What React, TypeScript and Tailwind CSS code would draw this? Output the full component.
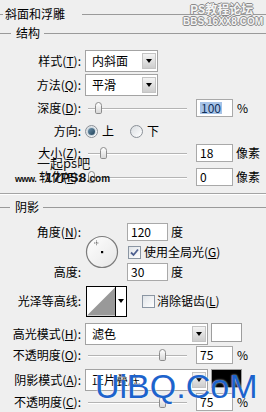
import type { ReactNode } from 'react';

const LINE = 'bg-[#9a9a9a]';

const Mn = ({ children }: { children: ReactNode }) => (
  <span className="underline underline-offset-[1px]">{children}</span>
);

function Row({ label, className, children }: { label: ReactNode; className: string; children: ReactNode }) {
  return (
    <div className={`flex items-center ${className}`}>
      <div className="w-[81px] shrink-0 text-right leading-none whitespace-nowrap">{label}</div>
      <div className="ml-[4px] flex h-full items-center">{children}</div>
    </div>
  );
}

function Field({ value, className = 'w-[37px]', selected = false }: { value: string; className?: string; selected?: boolean }) {
  return (
    <div className={`flex h-[18px] items-center border border-[#a9a9a9] bg-white pl-[3px] leading-none ${className}`}>
      {selected ? <span className="bg-[#a6c2e6] px-px text-[#10305a]">{value}</span> : value}
    </div>
  );
}

function Slider({ thumb }: { thumb: string }) {
  return (
    <div className="relative h-[18px] w-[105px]">
      <div className="absolute left-[3px] right-[3px] top-[9px] h-px bg-[#b4b4b4]" />
      <div className="absolute left-[3px] right-[3px] top-[10px] h-px bg-white" />
      <div
        className={`absolute top-[3px] h-[12px] w-[7px] rounded-t-[4px] rounded-b-[2px] border border-[#8c8c8c] bg-gradient-to-b from-white to-[#d8d8d8] ${thumb}`}
      />
    </div>
  );
}

function Arrow() {
  return <div className="h-0 w-0 border-x-[3.5px] border-t-[4px] border-x-transparent border-t-black" />;
}

function Select({ value, className }: { value: string; className: string }) {
  return (
    <div className={`flex h-[22px] border border-[#a3a3a3] bg-white ${className}`}>
      <div className="flex flex-1 items-center pl-[6px] leading-none">{value}</div>
      <div className="my-[2px] mr-[1px] flex w-[14px] items-center justify-center border border-[#c4c4c4] bg-gradient-to-b from-[#f4f4f4] to-[#cdcdcd]">
        <Arrow />
      </div>
    </div>
  );
}

function Radio({ on }: { on?: boolean }) {
  return (
    <div className="flex h-[13px] w-[13px] items-center justify-center rounded-full border border-[#8a9097] bg-gradient-to-br from-[#d9dde1] to-white">
      {on && <div className="h-[7px] w-[7px] rounded-full bg-gradient-to-br from-[#6f93ad] to-[#1f4259] ring-1 ring-[#c9d6df]" />}
    </div>
  );
}

function Check({ on }: { on?: boolean }) {
  return (
    <div className="flex h-[13px] w-[13px] items-center justify-center border border-[#8b96a3] bg-gradient-to-br from-[#e0e4e8] to-white">
      {on && (
        <svg width="9" height="9" viewBox="0 0 9 9">
          <path d="M1 4.5 L3.5 7 L8 1.5" fill="none" stroke="#4d5f8f" strokeWidth="1.8" />
        </svg>
      )}
    </div>
  );
}

const Header = ({ text, lead, gap }: { text: string; lead: string; gap: string }) => (
  <div className="flex h-[18px] items-center">
    <div className={`h-px ${LINE} ${lead}`} />
    <span className="ml-[5px] leading-none">{text}</span>
    <div className={`h-px flex-1 ${LINE} ${gap}`} />
  </div>
);

export default function App() {
  return (
    <div className="relative h-[412px] w-[266px] overflow-hidden bg-[#efefef] font-['Noto_Sans_CJK_SC','Noto_Sans',sans-serif] text-[12px] text-black">
      {/* 标题 */}
      <div className="mt-[4px] flex h-[20px] items-center">
        <div className={`h-px w-[3px] ${LINE}`} />
        <span className="ml-[2px] leading-none">斜面和浮雕</span>
        <div className={`ml-[17px] h-px flex-1 ${LINE}`} />
      </div>

      <Header text="结构" lead="w-[11px]" gap="ml-[4px]" />

      <Row label={<>样式(<Mn>T</Mn>):</>} className="mt-[8px] h-[22px]">
        <Select value="内斜面" className="w-[73px]" />
      </Row>
      <Row label={<>方法(<Mn>Q</Mn>):</>} className="mt-[2px] h-[22px]">
        <Select value="平滑" className="w-[73px]" />
      </Row>
      <Row label={<>深度(<Mn>D</Mn>):</>} className="mt-[3px] h-[18px]">
        <Slider thumb="left-[10px]" />
        <div className="ml-[6px]">
          <Field value="100" selected />
        </div>
        <span className="ml-[4px] leading-none">%</span>
      </Row>
      <Row label="方向:" className="mt-[5px] h-[18px]">
        <Radio on />
        <span className="ml-[4px] leading-none">上</span>
        <div className="ml-[16px]">
          <Radio />
        </div>
        <span className="ml-[4px] leading-none">下</span>
      </Row>
      <Row label={<>大小(<Mn>Z</Mn>):</>} className="mt-[4px] h-[18px]">
        <Slider thumb="left-[15px]" />
        <div className="ml-[6px]">
          <Field value="18" />
        </div>
        <span className="ml-[3px] leading-none">像素</span>
      </Row>
      <Row label={<>软化(<Mn>F</Mn>):</>} className="mt-[6px] h-[18px]">
        <Slider thumb="left-[3px]" />
        <div className="ml-[6px]">
          <Field value="0" />
        </div>
        <span className="ml-[3px] leading-none">像素</span>
      </Row>

      <div className="mt-[7px] h-px bg-[#a4a4a4]" />
      <div className="h-px bg-white" />

      <div className="mt-[3px]">
        <Header text="阴影" lead="w-[10px]" gap="ml-[4px]" />
      </div>

      {/* 角度 / 高度 */}
      <div className="mt-[7px] flex h-[58px]">
        <div className="flex w-[81px] flex-col justify-between text-right">
          <div className="h-[18px] leading-[18px]">角度(<Mn>N</Mn>):</div>
          <div className="h-[18px] leading-[18px]">高度:</div>
        </div>
        <div className="ml-[4px] flex w-[34px] items-center">
          <svg width="34" height="34" viewBox="0 0 34 34">
            <defs>
              <linearGradient id="dial" x1="0" y1="0" x2="1" y2="1">
                <stop offset="0" stopColor="#ffffff" />
                <stop offset="1" stopColor="#e6e6e6" />
              </linearGradient>
            </defs>
            <circle cx="17" cy="17" r="15.5" fill="url(#dial)" stroke="#7c7c7c" strokeWidth="1.2" />
            <rect x="16" y="16" width="2.2" height="2.2" fill="#000" />
            <path d="M11.5 5.5 v5 M9 8 h5" stroke="#555" strokeWidth="0.8" strokeDasharray="1 0.6" />
          </svg>
        </div>
        <div className="ml-[8px] flex flex-col justify-between">
          <div className="flex items-center">
            <Field value="120" className="w-[41px]" />
            <span className="ml-[3px] leading-none">度</span>
          </div>
          <div className="ml-px flex items-center">
            <Check on />
            <span className="ml-[3px] leading-none">使用全局光(<Mn>G</Mn>)</span>
          </div>
          <div className="flex items-center">
            <Field value="30" className="w-[41px]" />
            <span className="ml-[3px] leading-none">度</span>
          </div>
        </div>
      </div>

      <Row label="光泽等高线:" className="mt-[5px] h-[30px]">
        <div className="ml-px flex h-[31px] w-[41px] border border-black bg-white">
          <svg width="29" height="29" viewBox="0 0 29 29" className="border-r border-black">
            <polygon points="0,29 29,0 29,29" fill="#999999" />
          </svg>
          <div className="flex flex-1 items-center justify-center">
            <Arrow />
          </div>
        </div>
        <div className="ml-[15px]">
          <Check />
        </div>
        <span className="ml-[2px] leading-none">消除锯齿(<Mn>L</Mn>)</span>
      </Row>

      <Row label={<>高光模式(<Mn>H</Mn>):</>} className="mt-[7px] h-[22px]">
        <Select value="滤色" className="w-[123px]" />
        <div className="ml-[3px] h-[19px] w-[31px] self-start border border-[#9d9d9d] bg-white" />
      </Row>
      <Row label={<>不透明度(<Mn>O</Mn>):</>} className="mt-px h-[18px]">
        <Slider thumb="left-[74px]" />
        <div className="ml-[6px]">
          <Field value="75" />
        </div>
        <span className="ml-[4px] leading-none">%</span>
      </Row>
      <Row label={<>阴影模式(<Mn>A</Mn>):</>} className="mt-[5px] h-[22px]">
        <Select value="正片叠底" className="w-[123px]" />
        <div className="ml-[3px] h-[19px] w-[31px] self-start border border-[#9d9d9d] bg-black" />
      </Row>
      <Row label={<>不透明度(<Mn>C</Mn>):</>} className="mt-[2px] h-[18px]">
        <Slider thumb="left-[74px]" />
        <div className="ml-[6px]">
          <Field value="75" />
        </div>
        <span className="ml-[4px] leading-none">%</span>
      </Row>

      {/* 水印 */}
      <div className="absolute left-[190px] top-[3px] text-[12px] leading-none font-bold text-[#f4f4f4] [text-shadow:1px_0_#8a8a8a,-1px_0_#8a8a8a,0_1px_#8a8a8a,0_-1px_#8a8a8a]">
        PS教程论坛
      </div>
      <div className="absolute left-[183px] top-[17px] font-['Liberation_Sans',sans-serif] text-[10px] leading-none font-bold text-[#f4f4f4] [text-shadow:1px_0_#8a8a8a,-1px_0_#8a8a8a,0_1px_#8a8a8a,0_-1px_#8a8a8a]">
        BBS.16XX8.COM
      </div>
      <div className="absolute left-[37px] top-[156px] text-[13px] leading-none text-[#111]">一起ps吧</div>
      <div className="absolute left-[15px] top-[171px] flex items-end font-['Liberation_Sans',sans-serif] leading-none text-[#111]">
        <span className="text-[9px] font-bold tracking-[-0.5px]">www.</span>
        <span className="ml-[9px] text-[13px] font-black tracking-[0.5px]">17PS8</span>
        <span className="text-[10px] font-bold">.com</span>
      </div>
      <div className="absolute left-[95px] top-[369px] whitespace-nowrap font-['Liberation_Sans',sans-serif] text-[34px] leading-none text-[#1d63cc] [text-shadow:0_0_2px_#ffffff]">
        UiBQ.CoM
      </div>
    </div>
  );
}
